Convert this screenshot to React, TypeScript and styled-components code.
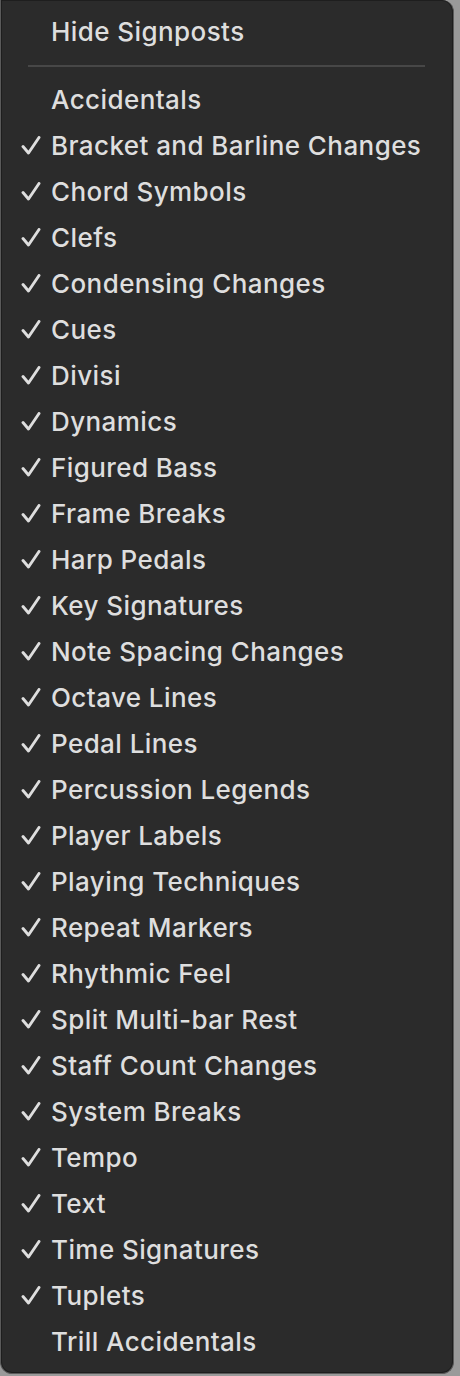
import React from 'react';
import styled, { createGlobalStyle } from 'styled-components';

const GlobalStyle = createGlobalStyle`
  html, body {
    margin: 0;
    padding: 0;
    background: #9a9a9a;
  }
  body {
    width: 460px;
    height: 1376px;
    overflow: hidden;
  }
`;

const Menu = styled.div`
  box-sizing: border-box;
  width: 454px;
  height: 1374px;
  background: #2b2b2b;
  border: 1px solid #5a5a5a;
  border-top: none;
  border-radius: 0 12px 12px 12px;
  box-shadow: inset 0 0 0 1px #1e1e1e;
  padding: 8px 0 9px;
  font-family: Inter, "Open Sans", sans-serif;
  color: #dedede;
  display: flex;
  flex-direction: column;
`;

const Item = styled.div`
  height: 46px;
  display: flex;
  align-items: center;
  font-size: 26px;
  font-weight: 500;
  letter-spacing: 0.42px;
  white-space: nowrap;
`;

const CheckSlot = styled.span`
  width: 50px;
  display: flex;
  justify-content: flex-end;
  padding-right: 10px;
  box-sizing: border-box;
`;

const Separator = styled.div`
  height: 22px;
  display: flex;
  align-items: center;
  padding: 2px 28px 0 27px;
  box-sizing: border-box;
  &::after {
    content: '';
    flex: 1;
    height: 2px;
    background: #474747;
  }
`;

const Check = () => (
  <svg width="20" height="19" viewBox="0 0 20 19" fill="none">
    <path
      d="M2 10.5 L7.5 17 L18 1.5"
      stroke="#dedede"
      strokeWidth="2.9"
      strokeLinecap="round"
      strokeLinejoin="round"
    />
  </svg>
);

const items: [string, boolean][] = [
  ['Accidentals', false],
  ['Bracket and Barline Changes', true],
  ['Chord Symbols', true],
  ['Clefs', true],
  ['Condensing Changes', true],
  ['Cues', true],
  ['Divisi', true],
  ['Dynamics', true],
  ['Figured Bass', true],
  ['Frame Breaks', true],
  ['Harp Pedals', true],
  ['Key Signatures', true],
  ['Note Spacing Changes', true],
  ['Octave Lines', true],
  ['Pedal Lines', true],
  ['Percussion Legends', true],
  ['Player Labels', true],
  ['Playing Techniques', true],
  ['Repeat Markers', true],
  ['Rhythmic Feel', true],
  ['Split Multi-bar Rest', true],
  ['Staff Count Changes', true],
  ['System Breaks', true],
  ['Tempo', true],
  ['Text', true],
  ['Time Signatures', true],
  ['Tuplets', true],
  ['Trill Accidentals', false],
];

const MenuItem: React.FC<{ label: string; checked?: boolean }> = ({ label, checked }) => (
  <Item>
    <CheckSlot>{checked && <Check />}</CheckSlot>
    {label}
  </Item>
);

export default function App() {
  return (
    <>
      <GlobalStyle />
      <Menu>
        <MenuItem label="Hide Signposts" />
        <Separator />
        {items.map(([label, checked]) => (
          <MenuItem key={label} label={label} checked={checked} />
        ))}
      </Menu>
    </>
  );
}
